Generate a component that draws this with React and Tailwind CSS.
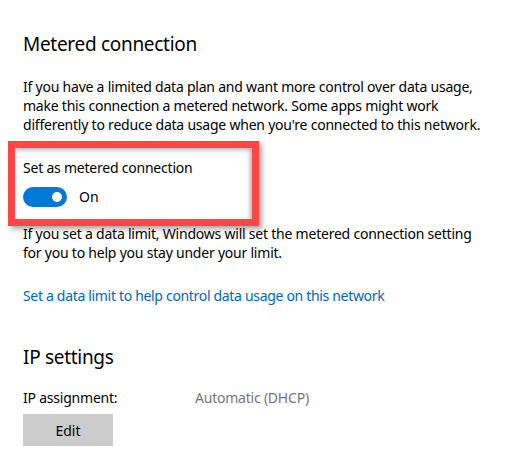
import React from 'react';

const Toggle = ({ on }) => (
  <div className={`w-[44px] h-[20px] rounded-full flex items-center px-[5px] ${on ? 'bg-[#0078d7] justify-end' : 'border-2 border-black justify-start'}`}>
    <div className={`w-[10px] h-[10px] rounded-full ${on ? 'bg-white' : 'bg-black'}`} />
  </div>
);

export default function App() {
  return (
    <div className="w-[521px] h-[466px] bg-white text-black overflow-hidden font-['Noto_Sans',sans-serif]">
      <div className="pl-[23px] pt-[30px]">
        <h2 className="text-[19px] leading-[28px] tracking-[-0.3px]">Metered connection</h2>

        <p className="mt-[19px] text-[14px] leading-[19px] tracking-[-0.22px] w-[480px]">
          If you have a limited data plan and want more control over data usage,<br />
          make this connection a metered network. Some apps might work<br />
          differently to reduce data usage when you're connected to this network.
        </p>

        <div className="ml-[-15px] mt-[7px] w-[251px] h-[85px] border-[7px] border-[#ff4646] shadow-[3px_3px_5px_rgba(0,0,0,0.35),inset_-2px_2px_4px_rgba(0,0,0,0.3)] pl-[8px] pt-[10px]">
          <div className="text-[14px] leading-[20px] tracking-[-0.22px]">Set as metered connection</div>
          <div className="mt-[9px] flex items-center gap-[12px]">
            <Toggle on />
            <span className="text-[14px] leading-[20px]">On</span>
          </div>
        </div>

        <p className="mt-[-2px] text-[14px] leading-[19px] tracking-[-0.22px] w-[480px]">
          If you set a data limit, Windows will set the metered connection setting<br />
          for you to help you stay under your limit.
        </p>

        <a className="block mt-[24px] text-[14px] leading-[19px] tracking-[-0.32px] text-[#0067b8]">
          Set a data limit to help control data usage on this network
        </a>

        <h2 className="mt-[38px] text-[19px] leading-[28px] tracking-[-0.3px]">IP settings</h2>

        <div className="mt-[17px] flex text-[14px] leading-[19px] tracking-[-0.22px]">
          <span className="w-[172px]">IP assignment:</span>
          <span className="text-[#767676]">Automatic (DHCP)</span>
        </div>

        <button className="mt-[7px] w-[90px] h-[32px] bg-[#cccccc] text-[14px]">Edit</button>
      </div>
    </div>
  );
}
